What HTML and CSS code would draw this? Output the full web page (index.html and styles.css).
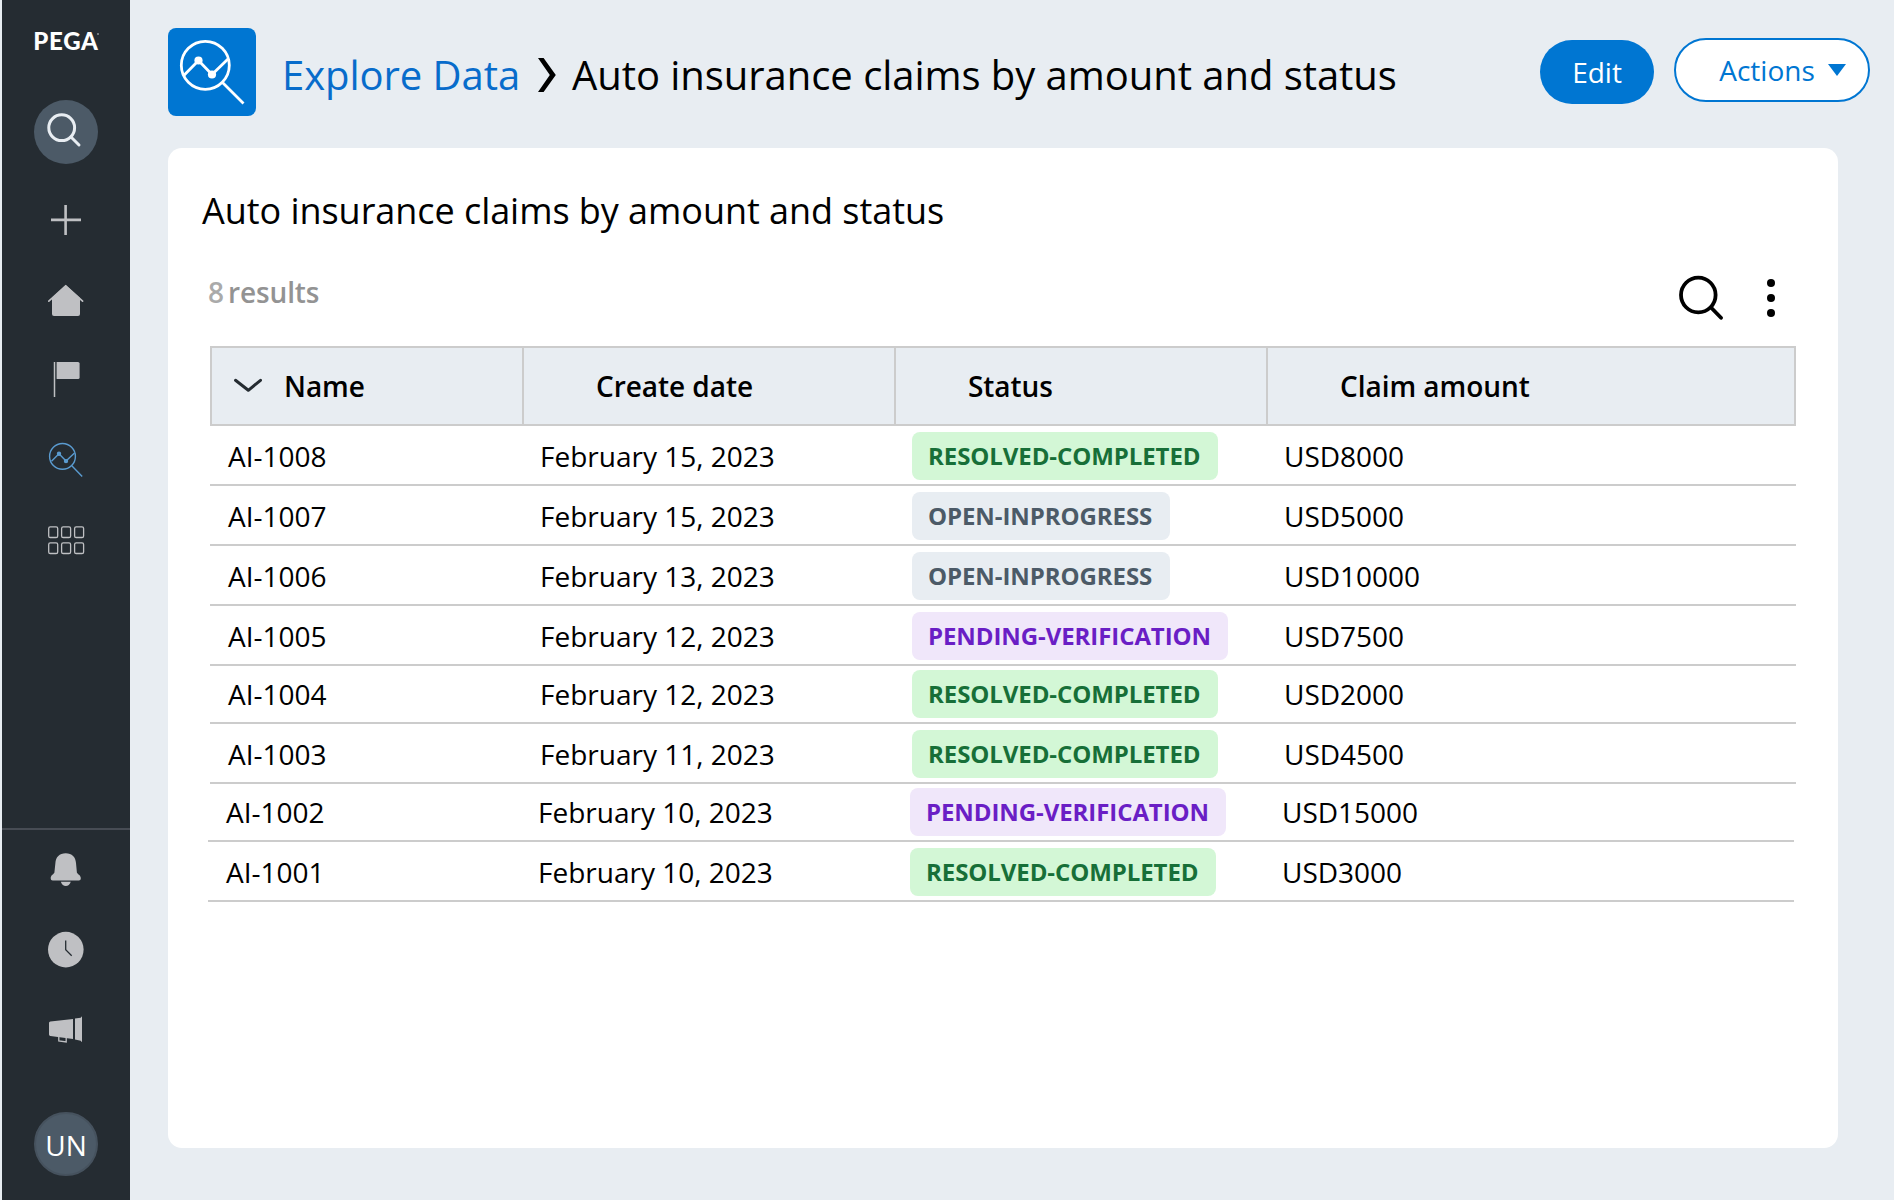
FILE: index.html
```html
<!DOCTYPE html>
<html lang="en">
<head>
<meta charset="utf-8">
<title>Explore Data</title>
<link rel="stylesheet" href="styles.css">
</head>
<body>
<div class="app">
  <nav class="sidebar">
    <div class="logo">PEGA<span class="logo-mark"></span></div>
    <div class="nav-main">
      <a class="nav-item nav-search"><svg width="64" height="64" fill="none" stroke="#e8edf2" stroke-width="3"><circle cx="27.7" cy="27.7" r="12.9"/><path d="M37 37l8 8" stroke-linecap="round"/></svg></a>
      <a class="nav-item"><svg width="64" height="64" fill="none" stroke="#bfc0c3" stroke-width="2.6"><path d="M31.6 17v30M17 31.9h30"/></svg></a>
      <a class="nav-item"><svg width="64" height="64" fill="#bfc0c3"><path d="M31.7 17L46 30v16q0 2-2 2H20q-2 0-2-2V30z"/><path d="M14.8 33.2L31.7 18l16.9 15.2" fill="none" stroke="#bfc0c3" stroke-width="1.7" stroke-linecap="round"/></svg></a>
      <a class="nav-item"><svg width="64" height="64" fill="#bfc0c3"><path d="M20.5 14v35" stroke="#bfc0c3" stroke-width="1.5"/><path d="M22.6 14H44q1.6 0 1.6 1.6V29.4q0 1.6-1.6 1.6H22.6z"/></svg></a>
      <a class="nav-item"><svg width="64" height="64" fill="none" stroke="#5a9bd0" stroke-width="1.4"><circle cx="28.5" cy="28.4" r="12.9"/><path d="M17.5 33.2L25 25.7l7 7.4 8.5-8M37.8 37.8L48.2 48.6"/><circle cx="25" cy="25.8" r="1.5" fill="#5a9bd0"/><circle cx="32" cy="33.1" r="1.5" fill="#5a9bd0"/></svg></a>
      <a class="nav-item"><svg width="64" height="64" fill="none" stroke="#bfc0c3" stroke-width="1.3"><rect x="14.7" y="18.9" width="9" height="10.6" rx="1.6"/><rect x="27.6" y="18.9" width="9" height="10.6" rx="1.6"/><rect x="40.6" y="18.9" width="9" height="10.6" rx="1.6"/><rect x="14.7" y="34.9" width="9" height="10.6" rx="1.6"/><rect x="27.6" y="34.9" width="9" height="10.6" rx="1.6"/><rect x="40.6" y="34.9" width="9" height="10.6" rx="1.6"/></svg></a>
    </div>
    <div class="nav-foot">
      <a class="nav-item"><svg width="64" height="64" fill="#bfc0c3"><path d="M31.7 15.2C38 15.2 41.6 19 42 25l.9 9.5c.3 1.6 3.9 2.4 3.9 5.700 0 1.300-.8 2.300-2 2.300H18.700c-1.200 0-2-1-2-2.300 0-3.300 3.400-4.100 3.700-5.700L21.400 25c.4-6 4-9.800 10.300-9.800z"/><path d="M26.800 43.800h10c-1.600 5.600-8.400 5.600-10 0z"/></svg></a>
      <a class="nav-item"><svg width="64" height="64"><circle cx="31.8" cy="31.6" r="17.8" fill="#bfc0c3"/><path d="M31.700 22.500v9.300l6 6" fill="none" stroke="#252c32" stroke-width="1.300"/></svg></a>
      <a class="nav-item"><svg width="64" height="64" fill="#bfc0c3"><path d="M16.400 23.500L39 21v20l-22.600-3q-1.400-.2-1.400-1.600V25.100q0-1.400 1.400-1.600zM41 20.600l5.700-.8 1.300-1.500v26l-1.300-1.500-5.700-1.200z"/><path d="M24.800 38.500v4.400l7.400 1.100v-4.500" fill="none" stroke="#bfc0c3" stroke-width="1.300"/></svg></a>
    </div>
    <div class="avatar">UN</div>
  </nav>
  <main class="main">
    <header class="header">
      <svg class="tile" width="88" height="88" fill="none" stroke="#fff" stroke-width="2.800"><circle cx="37.300" cy="37.300" r="24"/><path d="M15.800 47.500L30.500 32.500l13.500 14 16-15.500M54.500 54.500l21 21"/><g fill="#fff" stroke="none"><circle cx="30.500" cy="32.500" r="4.100"/><circle cx="44" cy="46.500" r="4.100"/></g></svg>
      <h1 class="crumbs">
        <a class="crumb-link">Explore Data</a>
        <svg class="crumb-sep" width="20" height="36"><path d="M1 1h5.600L18.800 18 6.600 35H1l11.800-17z"/></svg>
        <span class="crumb-current">Auto insurance claims by amount and status</span>
      </h1>
      <button class="btn btn-primary">Edit</button>
      <button class="btn btn-outline">Actions<svg class="caret" width="18" height="12"><path d="M0 0h18L9 12z" fill="#0076d2"/></svg></button>
    </header>
    <section class="panel">
      <h2 class="title">Auto insurance claims by amount and status</h2>
      <div class="toolbar">
        <div class="count"><span class="count-num">8</span><span>results</span></div>
        <svg class="tool-search" width="46" height="46" fill="none" stroke="#000" stroke-width="3.800"><circle cx="20.300" cy="21" r="17.300"/><path d="M33 33.500L43 43.800" stroke-linecap="round"/></svg>
        <svg class="tool-more" width="8" height="38"><circle cx="4" cy="4" r="4"/><circle cx="4" cy="19" r="4"/><circle cx="4" cy="34" r="4"/></svg>
      </div>
      <div class="table">
        <div class="thead">
          <div class="th th-sorted"><svg class="sort" width="28" height="16" fill="none" stroke="#252c32" stroke-width="3" stroke-linecap="round" stroke-linejoin="round"><path d="M1.500 2.300L14.300 12.300 26.500 2.300"/></svg>Name</div>
          <div class="th">Create date</div>
          <div class="th">Status</div>
          <div class="th">Claim amount</div>
        </div>
        <div class="row"><span>AI-1008</span><span>February 15, 2023</span><span class="badge done">RESOLVED-COMPLETED</span><span>USD8000</span></div>
        <div class="row"><span>AI-1007</span><span>February 15, 2023</span><span class="badge open">OPEN-INPROGRESS</span><span>USD5000</span></div>
        <div class="row"><span>AI-1006</span><span>February 13, 2023</span><span class="badge open">OPEN-INPROGRESS</span><span>USD10000</span></div>
        <div class="row"><span>AI-1005</span><span>February 12, 2023</span><span class="badge pending">PENDING-VERIFICATION</span><span>USD7500</span></div>
        <div class="row compact"><span>AI-1004</span><span>February 12, 2023</span><span class="badge done">RESOLVED-COMPLETED</span><span>USD2000</span></div>
        <div class="row"><span>AI-1003</span><span>February 11, 2023</span><span class="badge done">RESOLVED-COMPLETED</span><span>USD4500</span></div>
        <div class="row compact shifted"><span>AI-1002</span><span>February 10, 2023</span><span class="badge pending">PENDING-VERIFICATION</span><span>USD15000</span></div>
        <div class="row shifted"><span>AI-1001</span><span>February 10, 2023</span><span class="badge done">RESOLVED-COMPLETED</span><span>USD3000</span></div>
      </div>
    </section>
  </main>
</div>
</body>
</html>
```
FILE: styles.css
```css
* { box-sizing: border-box; }
body {
  margin: 0;
  background: #e8edf2;
  color: #000;
  font-family: "Open Sans", "Noto Sans", sans-serif;
  font-size: 28px;
}
svg { display: block; flex: none; }
h1, h2 { margin: 0; font-weight: 400; }

.app { display: flex; height: 1200px; padding-left: 2px; overflow: hidden; }

.sidebar {
  display: flex;
  flex-direction: column;
  align-items: center;
  width: 128px;
  flex: none;
  background: #252c32;
  padding: 25px 0 24px;
}
.logo {
  display: flex;
  height: 32px;
  color: #fff;
  font: 900 24px/32px Lato, sans-serif;
  letter-spacing: 0.7px;
}
.logo-mark { width: 2px; height: 2px; margin: 8px 0 0 -2px; border-radius: 1px; background: #8d9195; }
.nav-main { display: flex; flex-direction: column; gap: 16px; margin-top: 43px; }
.nav-item { display: block; width: 64px; height: 64px; }
.nav-search { margin-bottom: 8px; border-radius: 50%; background: #4c5a67; }
.nav-foot {
  display: flex;
  flex-direction: column;
  align-items: center;
  gap: 16px;
  width: 100%;
  margin-top: auto;
  padding-top: 8px;
  border-top: 2px solid #474c54;
}
.avatar {
  width: 64px;
  height: 64px;
  margin-top: 50px;
  border: 2px solid #46525e;
  border-radius: 50%;
  background: #4c5a67;
  color: #fff;
  font-size: 28px;
  line-height: 62px;
  text-align: center;
}

.main { flex: 1; padding: 28px 24px 52px 38px; }
.header { display: flex; align-items: flex-start; height: 120px; }
.tile { border-radius: 8px; background: #0076d2; }
.crumbs {
  display: flex;
  flex: 1;
  margin-left: 26px;
  padding-top: 20px;
  font-size: 40px;
  line-height: 54px;
  letter-spacing: -0.05px;
  white-space: nowrap;
}
.crumb-link { width: 255px; color: #086ccb; }
.crumb-sep { margin-top: 9px; }
.crumb-current { margin-left: 15px; }
.btn {
  display: flex;
  align-items: center;
  justify-content: center;
  height: 64px;
  border: 0;
  border-radius: 32px;
  padding: 0;
  font: 400 28px/38px "Open Sans", "Noto Sans", sans-serif;
}
.btn-primary { width: 114px; margin-top: 12px; background: #0076d2; color: #fff; }
.btn-outline {
  width: 196px;
  margin: 10px 0 0 20px;
  border: 2px solid #0076d2;
  background: #fff;
  color: #0076d2;
  padding-left: 21px;
}
.caret { margin-left: 13px; }

.panel {
  width: 1670px;
  height: 1000px;
  border-radius: 14px;
  background: #fff;
  padding: 39px 42px 0;
}
.title { margin-left: -8px; font-size: 36px; line-height: 48px; letter-spacing: -0.05px; }
.toolbar { display: flex; height: 111px; padding: 39px 21px 0 0; }
.count {
  display: flex;
  flex: 1;
  gap: 4px;
  margin: -1px 0 0 -2px;
  color: #939393;
  font-weight: 600;
  line-height: 38px;
  letter-spacing: -0.1px;
}
.count-num { color: #aaa; }
.tool-more { margin: 5px 0 0 43px; }

.table { width: 1586px; }
.thead {
  display: grid;
  grid-template-columns: 312px 372px 372px 1fr;
  height: 80px;
  border: 2px solid #ccc;
  background: #e8edf2;
}
.th {
  display: flex;
  align-items: center;
  padding-left: 72px;
  border-right: 2px solid #ccc;
  font-weight: 600;
  letter-spacing: -0.05px;
}
.th:last-child { border-right: 0; }
.th-sorted { padding-left: 22px; }
.sort { margin-right: 22px; }
.row {
  display: grid;
  grid-template-columns: 312px 372px 372px 1fr;
  align-items: end;
  height: 60px;
  padding: 0 0 4px 18px;
  border-bottom: 2px solid #ccc;
  line-height: 48px;
}
.compact { height: 58px; }
.shifted { margin-left: -2px; margin-right: 2px; }
.badge {
  height: 48px;
  width: 306px;
  border-radius: 8px;
  padding-left: 16px;
  font-size: 24px;
  font-weight: 700;
  line-height: 47px;
  letter-spacing: -0.08px;
  white-space: nowrap;
}
.done { background: #d3f7d6; color: #176f38; }
.open { width: 258px; background: #e8edf2; color: #4c5a67; }
.pending { width: 316px; background: #f0e7fa; color: #6a1ec5; }
```
